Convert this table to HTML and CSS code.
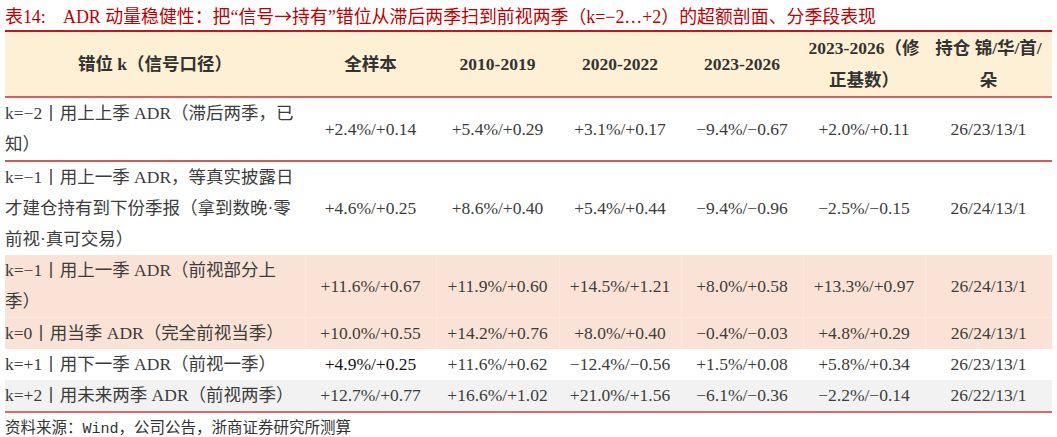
FILE: index.html
```html
<!DOCTYPE html>
<html lang="zh-CN">
<head>
<meta charset="utf-8">
<title>表14 ADR 动量稳健性</title>
<link rel="stylesheet" href="styles.css">
</head>
<body>
<div class="page">
  <div class="caption"><span class="cap-no">表14:</span><span class="cap-text">ADR 动量稳健性：把“信号<span class="arrow">→</span>持有”错位从滞后两季扫到前视两季（k=−2…+2）的超额剖面、分季段表现</span></div>
  <table class="grid">
    <colgroup>
      <col class="c1"><col class="c2"><col class="c3"><col class="c4"><col class="c5"><col class="c6"><col class="c7">
    </colgroup>
    <thead>
      <tr class="head">
        <th>错位 k（信号口径）</th>
        <th>全样本</th>
        <th>2010-2019</th>
        <th>2020-2022</th>
        <th>2023-2026</th>
        <th class="wrap">2023-2026（修<br>正基数）</th>
        <th class="wrap">持仓 锦/华/首/<br>朵</th>
      </tr>
    </thead>
    <tbody>
      <tr class="r-sep">
        <td class="lbl">k=−2丨用上上季 ADR（滞后两季，已<br>知）</td>
        <td>+2.4%/+0.14</td><td>+5.4%/+0.29</td><td>+3.1%/+0.17</td><td>−9.4%/−0.67</td><td>+2.0%/+0.11</td><td>26/23/13/1</td>
      </tr>
      <tr>
        <td class="lbl">k=−1丨用上一季 ADR，等真实披露日<br>才建仓持有到下份季报（拿到数晚·零<br>前视·真可交易）</td>
        <td>+4.6%/+0.25</td><td>+8.6%/+0.40</td><td>+5.4%/+0.44</td><td>−9.4%/−0.96</td><td>−2.5%/−0.15</td><td>26/24/13/1</td>
      </tr>
      <tr class="pink">
        <td class="lbl">k=−1丨用上一季 ADR（前视部分上<br>季）</td>
        <td>+11.6%/+0.67</td><td>+11.9%/+0.60</td><td>+14.5%/+1.21</td><td>+8.0%/+0.58</td><td>+13.3%/+0.97</td><td>26/24/13/1</td>
      </tr>
      <tr class="pink">
        <td class="lbl">k=0丨用当季 ADR（完全前视当季）</td>
        <td>+10.0%/+0.55</td><td>+14.2%/+0.76</td><td>+8.0%/+0.40</td><td>−0.4%/−0.03</td><td>+4.8%/+0.29</td><td>26/24/13/1</td>
      </tr>
      <tr>
        <td class="lbl">k=+1丨用下一季 ADR（前视一季）</td>
        <td class="dark">+4.9%/+0.25</td><td>+11.6%/+0.62</td><td>−12.4%/−0.56</td><td>+1.5%/+0.08</td><td>+5.8%/+0.34</td><td>26/23/13/1</td>
      </tr>
      <tr class="grey last">
        <td class="lbl">k=+2丨用未来两季 ADR（前视两季）</td>
        <td>+12.7%/+0.77</td><td>+16.6%/+1.02</td><td>+21.0%/+1.56</td><td>−6.1%/−0.36</td><td>−2.2%/−0.14</td><td>26/22/13/1</td>
      </tr>
    </tbody>
  </table>
  <div class="source">资料来源：<span class="mono">Wind</span>，公司公告，浙商证券研究所测算</div>
</div>
</body>
</html>
```
FILE: styles.css
```css
html, body {
  margin: 0;
  padding: 0;
  background: #ffffff;
}

.page {
  width: 1057px;
  padding-left: 5px;
  box-sizing: border-box;
  font-family: "Liberation Serif", "Noto Sans CJK SC", serif;
}

.caption {
  height: 30px;
  line-height: 30px;
  font-size: 17.9px;
  color: #c00000;
  white-space: nowrap;
  overflow: hidden;
}

.cap-no {
  display: inline-block;
  width: 58px;
}

.arrow {
  font-family: "Noto Sans CJK SC", sans-serif;
}

.grid {
  width: 1047px;
  border-collapse: collapse;
  table-layout: fixed;
  font-size: 17.5px;
  line-height: 31px;
  color: #3c3c3c;
}

.c1 { width: 300px; }
.c2 { width: 131px; }
.c3 { width: 123px; }
.c4 { width: 122px; }
.c5 { width: 122px; }
.c6 { width: 122px; }
.c7 { width: 127px; }

.head th {
  background: #fdf0d4;
  font-weight: bold;
  color: #333333;
  text-align: center;
  vertical-align: middle;
  padding: 0;
  height: 62px;
  border-top: 2px solid #c8141c;
  border-bottom: 2px solid #d8605f;
  white-space: nowrap;
}

.head th.wrap {
  line-height: 32px;
}

.grid td {
  padding: 0;
  text-align: center;
  vertical-align: middle;
  white-space: nowrap;
}

.grid td.lbl {
  text-align: left;
}

.grid td.dark {
  color: #141414;
}

.r-sep td {
  border-bottom: 2px solid #cf5a5a;
}

.pink td {
  background: #fae3d6;
  border-left: 1px solid #fbe9df;
}

.pink td:first-child {
  border-left: none;
}

.pink + .pink td {
  border-top: 1px solid #fbe8de;
}

.grey td {
  background: #f2f2f2;
}

.last td {
  border-bottom: 2px solid #d56b6b;
}

.source {
  height: 26px;
  line-height: 26px;
  font-size: 15.5px;
  color: #333333;
  font-family: "Noto Sans CJK SC", sans-serif;
  white-space: nowrap;
}

.mono {
  font-family: "Liberation Mono", monospace;
  font-size: 15px;
}
```
